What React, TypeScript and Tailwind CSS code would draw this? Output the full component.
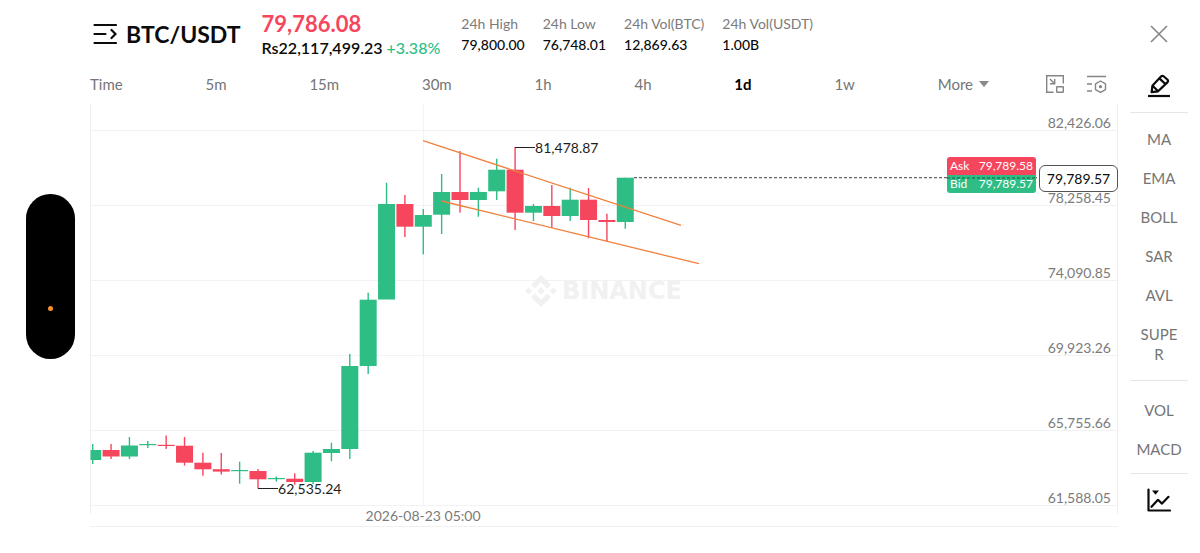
import React from "react";
import clsx from "clsx";

interface Candle {
    open: number;
    close: number;
    high: number;
    low: number;
    up: boolean;
}

// [body top, body bottom, wick top, wick bottom, direction]
const rows: [number, number, number, number, "up" | "down"][] = [
    [347, 357, 341, 361, "up"],
    [347, 353.5, 341, 356, "down"],
    [342.5, 353.5, 334, 356, "up"],
    [341, 342.2, 338, 345, "up"],
    [341.8, 343, 332.5, 346, "down"],
    [342.7, 359.7, 334, 362.5, "down"],
    [359.7, 366.3, 349.7, 372.7, "down"],
    [366.2, 368.6, 350, 371.5, "down"],
    [367, 368.2, 358.7, 380.7, "up"],
    [368, 376.3, 366, 385.5, "down"],
    [375, 376.2, 373.5, 378.5, "up"],
    [375.7, 379, 370.3, 381.7, "down"],
    [349.7, 379, 348, 381, "up"],
    [346, 350, 339.7, 358.3, "up"],
    [263, 346, 251, 356, "up"],
    [196.7, 263, 189.7, 271, "up"],
    [101, 196.5, 79.7, 196, "up"],
    [101, 123.7, 92, 134, "down"],
    [112, 123.7, 106, 151.3, "up"],
    [89, 111.7, 71, 131, "up"],
    [89, 97, 48, 109.7, "down"],
    [89, 97, 84.7, 113.7, "up"],
    [66.7, 88.3, 55.7, 97, "up"],
    [66.7, 109.7, 44, 127, "down"],
    [103, 109.7, 101, 118, "up"],
    [103, 113, 82, 124.7, "down"],
    [96.7, 113, 84.7, 118, "up"],
    [96.7, 117, 85, 135.3, "down"],
    [117, 119, 110.7, 138.3, "down"],
    [74.7, 119, 74.7, 125.7, "up"],
];

const candles: Candle[] = rows.map(([open, close, high, low, dir]) => ({ open, close, high, low, up: dir === "up" }));

const stats = [
    { label: "24h High", value: "79,800.00" },
    { label: "24h Low", value: "76,748.01" },
    { label: "24h Vol(BTC)", value: "12,869.63" },
    { label: "24h Vol(USDT)", value: "1.00B" },
];

const intervals = ["Time", "5m", "15m", "30m", "1h", "4h", "1d", "1w"];
const prices = ["82,426.06", "78,258.45", "74,090.85", "69,923.26", "65,755.66", "61,588.05"];
const overlays = ["MA", "EMA", "BOLL", "SAR", "AVL"];

const Header: React.FC = () => (
    <header className="flex h-[67px] items-start pt-3">
        <button type="button" className="mt-2 flex items-center gap-[9px] pl-[3px]">
            <svg width="24" height="24" viewBox="0 0 24 24" fill="none" stroke="#0b0b0b" strokeWidth="2.2" strokeLinecap="round">
                <path d="M1.5 3h21.5M1.5 12h11M1.5 21h21.5M18.5 8l4 4-4 4" />
            </svg>
            <h1 className="text-[23px] leading-7 font-bold">BTC/USDT</h1>
        </button>
        <div className="ml-[21px]">
            <p className="text-[22px] leading-6 font-bold text-[#f6465d]">79,786.08</p>
            <p className="text-base leading-6 font-semibold">
                Rs22,117,499.23 <span className="font-medium text-[#2ebd85]">+3.38%</span>
            </p>
        </div>
        <dl className="mt-px ml-[21px] flex gap-[18px] text-sm leading-[21px]">
            {stats.map((s) => (
                <div key={s.label}>
                    <dt className="text-[#7b7b7b]">{s.label}</dt>
                    <dd className="font-medium">{s.value}</dd>
                </div>
            ))}
        </dl>
    </header>
);

const Intervals: React.FC = () => (
    <div className="flex h-9 items-center pr-[11px] pb-0.5 text-[15px] text-[#757575]">
        <nav className="flex flex-1 items-center justify-between">
            {intervals.map((name) => (
                <button key={name} type="button" className={clsx(name === "1d" && "font-bold text-black")}>
                    {name}
                </button>
            ))}
            <button type="button" className="flex items-center gap-[6px]">
                More
                <svg width="10" height="6" viewBox="0 0 10 6" fill="#8a8a8a"><path d="M0 0h10L5.8 5.3q-.8.9-1.6 0z" /></svg>
            </button>
        </nav>
        <div className="ml-14 flex gap-[22px]">
            <button type="button" aria-label="Minimize chart">
                <svg width="20" height="20" viewBox="0 0 20 20" fill="none" stroke="#858585" strokeWidth="1.4">
                    <path d="M8.5 18.3H1.7V1.7h16.6v7.8M5 5l4.4 4.4M9.7 5v4.7H5" />
                    <rect x="11.7" y="12.7" width="6.6" height="5.6" rx="0.5" />
                </svg>
            </button>
            <button type="button" aria-label="Chart settings">
                <svg width="20" height="20" viewBox="0 0 20 20" fill="none" stroke="#858585" strokeWidth="1.4">
                    <path d="M0 2.5h19M0 10h5M0 17h5" />
                    <path d="M13.5 7l5 2.8v5.8l-5 2.8-5-2.8V9.8z" />
                    <circle cx="13.5" cy="12.7" r="1.6" fill="#858585" stroke="none" />
                </svg>
            </button>
        </div>
    </div>
);

const Watermark: React.FC = () => (
    <div className="absolute top-[172px] left-[42.3%] flex items-center gap-[5px] text-[#f1f1f1]">
        <svg width="32" height="32" viewBox="0 0 126.6 126.6" fill="currentColor">
            <path d="M38.7 53.2l24.6-24.6 24.6 24.6 14.3-14.3L63.3 0 24.4 38.9zM0 63.3L14.3 49l14.3 14.3-14.3 14.3zM38.7 73.4l24.6 24.6 24.6-24.6 14.3 14.3-38.9 38.9-38.9-38.9zM98 63.3L112.3 49l14.3 14.3-14.3 14.3zM77.8 63.3L63.3 48.8 48.8 63.3l14.5 14.5z" />
        </svg>
        <span className="font-['DejaVu_Sans',sans-serif] text-2xl leading-8 font-bold">BINANCE</span>
    </div>
);

const Chart: React.FC = () => (
    <section className="relative border-b border-[#f0f0f0] pb-3 text-sm">
        <div className="relative border-x border-[#f0f0f0] pb-2">
            {prices.map((price, i) => (
                <div
                    key={price}
                    className={clsx("flex items-end justify-end border-b border-[#f2f2f2] pr-[6px] leading-[14px] text-[#7b7b7b]", i === 0 ? "h-7" : "h-[75px]")}
                >
                    {price}
                </div>
            ))}
            <Watermark />
        </div>
        <svg className="absolute top-0 left-0 h-[411px] w-full" viewBox="0 0 1028 411" preserveAspectRatio="none">
            <path d="M333.5 0v403" stroke="#f3f3f3" />
            {candles.map((c, i) => {
                const x = 2.7 + i * 18.365;
                const color = c.up ? "#2ebd85" : "#f6465d";
                const left = Math.max(x - 8.5, 0.5);
                return (
                    <g key={i} fill={color}>
                        <rect x={x - 0.7} y={c.high} width="1.4" height={c.low - c.high} />
                        <rect x={left} y={c.open} width={x + 8.5 - left} height={c.close - c.open} />
                    </g>
                );
            })}
            <path d="M333 37.7L591 122.3M351.5 98L609 160.7" stroke="#f0803c" strokeWidth="1.3" />
            <path d="M425 44.5h20M168 385.5h20" stroke="#222" strokeWidth="1.2" />
            <path d="M544 74.7h403" stroke="#666" strokeWidth="1.3" strokeDasharray="3 2" />
        </svg>
        <span className="absolute top-[35px] left-[43.3%] leading-5 text-[#1e1e1e]">81,478.87</span>
        <span className="absolute top-[376px] left-[18.3%] leading-5 text-[#1e1e1e]">62,535.24</span>
        <time className="absolute bottom-0 left-[32.4%] -translate-x-1/2 leading-5 text-[#7b7b7b]">2026-08-23 05:00</time>
        <div className="absolute top-[54px] right-0 flex items-start gap-[3px]">
            <dl className="relative w-[89px] overflow-hidden rounded-[3px] text-xs leading-[18px] text-white">
                <div className="flex justify-between bg-[#f6465d] px-[3px]">
                    <dt>Ask</dt>
                    <dd>79,789.58</dd>
                </div>
                <div className="flex justify-between bg-[#2ebd85] px-[3px]">
                    <dt>Bid</dt>
                    <dd>79,789.57</dd>
                </div>
                <svg className="absolute top-5 left-0 w-full" height="2"><path d="M0 1h89" stroke="#1d5b44" strokeWidth="1.2" strokeDasharray="3 2" /></svg>
            </dl>
            <p className="mt-2 flex h-[27px] w-[79px] items-center justify-center rounded-md border border-[#555] bg-white">79,789.57</p>
        </div>
    </section>
);

const Sidebar: React.FC = () => (
    <aside className="mx-3 flex w-[58px] flex-col items-center text-[15px] text-[#757575]">
        <button type="button" aria-label="Close" className="mt-6 h-5">
            <svg width="20" height="20" viewBox="0 0 20 20" stroke="#858585" strokeWidth="1.6"><path d="M2 2l16 16M18 2L2 18" /></svg>
        </button>
        <div className="mt-5 flex h-[49px] w-full items-center justify-center border-b border-[#e6e6e6] pb-1">
            <button type="button" aria-label="Draw">
                <svg width="24" height="24" viewBox="0 0 24 24" fill="none" stroke="#0b0b0b" strokeWidth="2.2" strokeLinejoin="round">
                    <path d="M4.6 18.2l.8-6.4L14 2.6q1.4-1.4 2.9-.1l3.4 3q1.4 1.4.1 2.9l-9.3 8.9zM12.6 4.6l5.8 5.4M5.6 11.8l5.3 5.2" />
                    <path d="M1 22h22" />
                </svg>
            </button>
        </div>
        <div className="flex w-full flex-col items-center border-b border-[#e6e6e6] pt-[7px] pb-4">
            {overlays.map((name) => (
                <button key={name} type="button" className="h-[39px] leading-[39px]">{name}</button>
            ))}
            <button type="button" className="mt-[9px] w-10 leading-5 break-all">SUPER</button>
        </div>
        <div className="flex w-full flex-col items-center border-b border-[#e6e6e6] pt-[10px] pb-1">
            <button type="button" className="h-[39px] leading-[39px]">VOL</button>
            <button type="button" className="h-[39px] leading-[39px]">MACD</button>
        </div>
        <button type="button" aria-label="Indicators" className="mt-[14px]">
            <svg width="24" height="24" viewBox="0 0 24 24" fill="none" stroke="#0b0b0b" strokeWidth="2.2" strokeLinecap="round">
                <path d="M1.5 1.5v21H23M4.5 18.8l6.5-7 4 3.8 6.5-6.8" strokeLinejoin="round" />
                <path d="M5 2.5h7L8.5 6.8z" fill="#0b0b0b" stroke="none" />
            </svg>
        </button>
    </aside>
);

const App: React.FC = () => {
    return (
        <div className="flex min-h-screen bg-white font-[Lato,sans-serif] text-[#0b0b0b]">
            <div className="flex w-[90px] shrink-0 items-center pl-[26px]">
                <div className="flex h-[165px] w-[49px] items-end justify-center rounded-full bg-black pb-12">
                    <span className="size-[5px] rounded-full bg-[#f7902f]" />
                </div>
            </div>
            <main className="min-w-0 flex-1">
                <Header />
                <Intervals />
                <Chart />
            </main>
            <Sidebar />
        </div>
    );
};

export default App;
